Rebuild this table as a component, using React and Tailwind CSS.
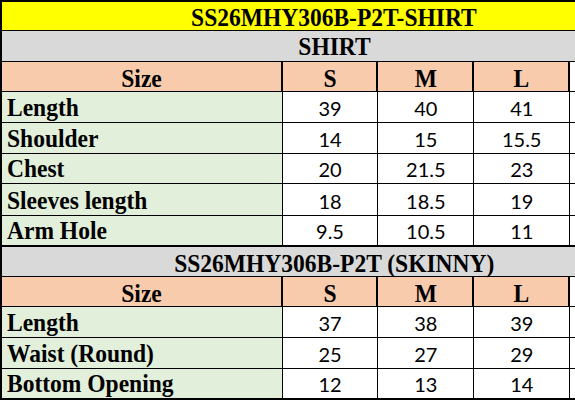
const shirt = [
  { label: 'Length', vals: ['39', '40', '41'], h: 'h-[31px]' },
  { label: 'Shoulder', vals: ['14', '15', '15.5'], h: 'h-[31px]' },
  { label: 'Chest', vals: ['20', '21.5', '23'], h: 'h-[30px]' },
  { label: 'Sleeves length', vals: ['18', '18.5', '19'], h: 'h-[32px]' },
  { label: 'Arm Hole', vals: ['9.5', '10.5', '11'], h: 'h-[31px]', last: true },
]

const skinny = [
  { label: 'Length', vals: ['37', '38', '39'], h: 'h-[31px]' },
  { label: 'Waist (Round)', vals: ['25', '27', '29'], h: 'h-[31px]' },
  { label: 'Bottom Opening', vals: ['12', '13', '14'], h: 'h-[31px]', last: true },
]

const serif = "font-['Liberation_Serif',serif] font-bold text-[25px] leading-none text-black"
const num = "font-['Lato',sans-serif] text-[20px] leading-none text-black"

// the sheet's serif looks a bit narrower than Times, so squeeze it a touch
function Sq({ children, left }) {
  return <span className={`inline-block whitespace-nowrap scale-x-[0.94] ${left ? 'origin-left' : 'origin-center'}`}>{children}</span>
}

function HeaderRow() {
  return (
    <div className="flex h-[30px] border-b border-black">
      <div className={`w-[281px] border-r-2 border-black bg-[#F8CBAD] flex items-end justify-center ${serif}`}><Sq>Size</Sq></div>
      {['S', 'M', 'L'].map(s => (
        <div key={s} className={`w-[96px] border-r-2 border-black bg-[#F8CBAD] flex items-end justify-center ${serif}`}><Sq>{s}</Sq></div>
      ))}
      <div className="w-[96px] border-r border-black" />
    </div>
  )
}

function DataRow({ row }) {
  return (
    <div className={`flex ${row.h} ${row.last ? 'border-b-2' : 'border-b'} border-black`}>
      <div className={`w-[281px] border-r border-black bg-[#E2EFDA] flex items-end pl-[5px] pb-[2px] ${serif}`}><Sq left>{row.label}</Sq></div>
      {row.vals.map((v, i) => (
        <div key={i} className={`w-[96px] border-r border-black flex items-end justify-center pb-[4px] ${num}`}>{v}</div>
      ))}
      <div className="w-[96px] border-r border-black" />
    </div>
  )
}

export default function App() {
  return (
    <div className="w-[575px] h-[403px] overflow-hidden bg-white">
      <div className="w-[668px] border-l-2 border-t-2 border-r-2 border-black">
        <div className={`h-[29px] bg-[#FFFF00] border-b border-black flex items-end justify-center ${serif}`}><Sq>SS26MHY306B-P2T-SHIRT</Sq></div>
        <div className={`h-[31px] bg-[#D9D9D9] border-b border-black flex items-end justify-center pb-[2px] ${serif}`}><Sq>SHIRT</Sq></div>
        <HeaderRow />
        {shirt.map((r, i) => <DataRow key={i} row={r} />)}
        <div className={`h-[30px] bg-[#D9D9D9] border-b border-black flex items-end justify-center ${serif}`}><Sq>SS26MHY306B-P2T (SKINNY)</Sq></div>
        <HeaderRow />
        {skinny.map((r, i) => <DataRow key={i} row={r} />)}
      </div>
    </div>
  )
}
